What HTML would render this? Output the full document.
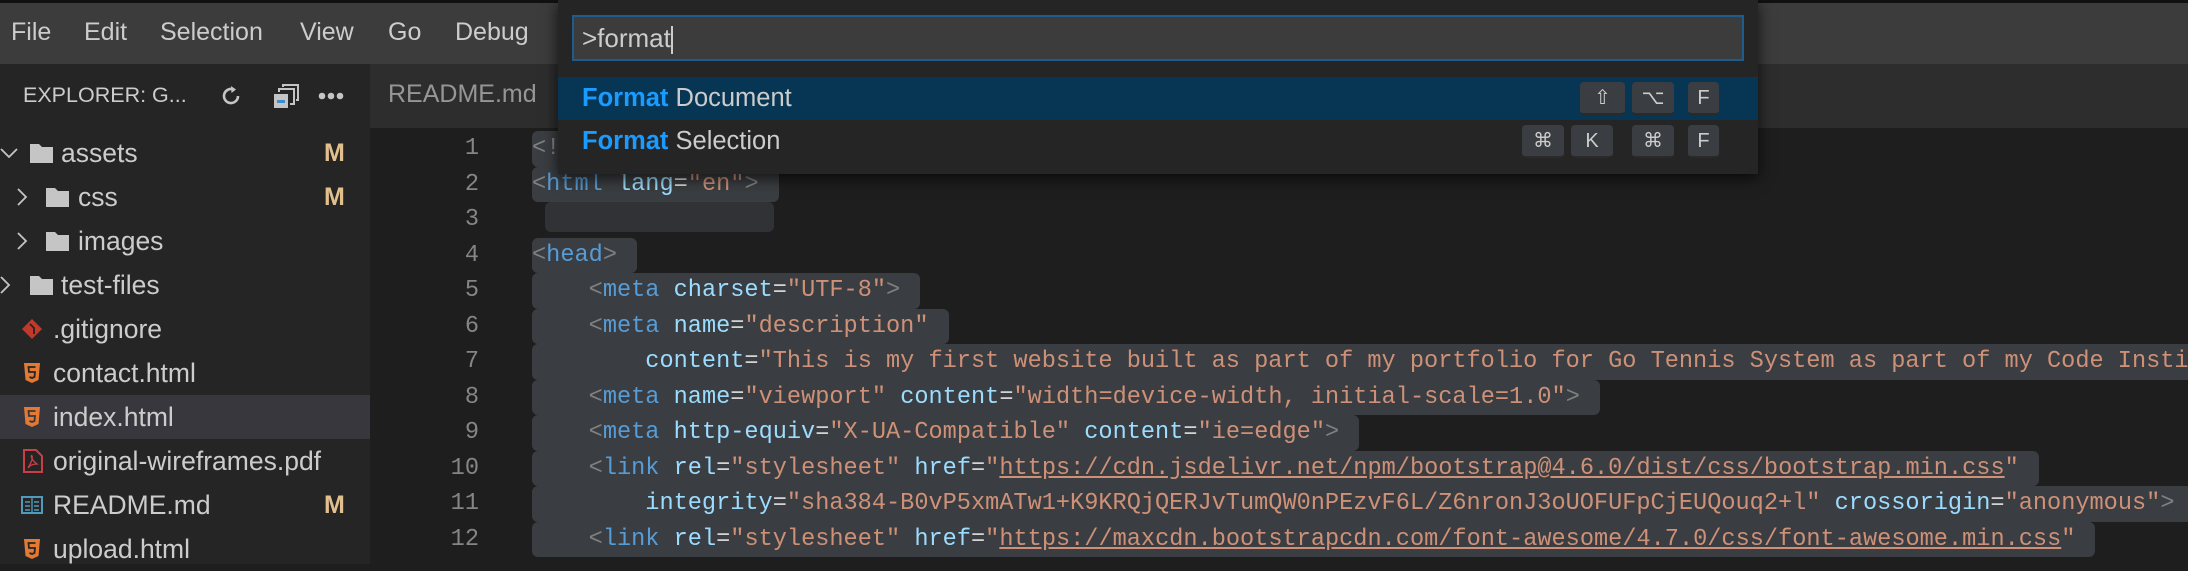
<!DOCTYPE html>
<html><head><meta charset="utf-8"><style>
*{margin:0;padding:0;box-sizing:border-box}
body{width:2188px;height:564px;overflow:hidden;background:#1e1e1e;position:relative;font-family:"Liberation Sans",sans-serif}
.abs{position:absolute}
#menu{left:0;top:0;width:2188px;height:64px;background:#3c3c3c;border-top:3px solid #111}
#menu span{position:absolute;top:15px;font-size:25px;color:#cccccc}
#side{left:0;top:64px;width:370px;height:500px;background:#252526}
#tabs{left:370px;top:64px;width:1818px;height:64px;background:#2d2d2d}
.row{position:absolute;left:0;width:370px;height:44px;font-size:26.5px;color:#cccccc;line-height:44px}
.row .t{position:absolute}
.row .m{position:absolute;left:324px;color:#e2c08d;font-weight:bold;font-size:25px}
.chev{position:absolute;top:0}
.code{position:absolute;left:532px;font-family:"Liberation Mono",monospace;font-size:23.6px;color:#d4d4d4;white-space:pre;height:35.5px;line-height:35.5px}
.code span.h{background:#3a3d41;border-radius:6px;padding-right:20px;display:inline-block;height:35.5px}
.p{color:#808080}.n{color:#569cd6}.a{color:#9cdcfe}.s{color:#ce9178}.u{color:#ce9178;text-decoration:underline}
.ln{position:absolute;left:380px;width:99px;text-align:right;font-family:"Liberation Mono",monospace;font-size:23.6px;color:#858585;line-height:35.5px}
#pal{left:558px;top:0;width:1200px;height:174px;background:#252526;box-shadow:0 4px 14px rgba(0,0,0,.7)}
#inp{left:14px;top:15px;width:1172px;height:46px;background:#3c3c3c;border:2px solid #1d5d8d;font-size:26px;color:#ccc;line-height:42px;padding-left:8px}
.pr{position:absolute;left:0;width:1200px;height:43px;font-size:25.5px;color:#ccc;line-height:43px}
.pr b{color:#1a9bff}
.k{position:absolute;top:5px;height:33px;background:#3a3d41;border-radius:4px;color:#ccc;font-size:20px;text-align:center;line-height:33px;border-bottom:2px solid #2a2a2a}
</style></head><body>
<div id="menu" class="abs">
<span style="left:11px">File</span><span style="left:84px">Edit</span><span style="left:160px">Selection</span><span style="left:300px">View</span><span style="left:388px">Go</span><span style="left:455px">Debug</span>
</div>
<div id="side" class="abs">
 <div class="abs" style="left:23px;top:19px;font-size:21.5px;color:#cccccc">EXPLORER: G...</div>
 <svg class="abs" style="left:218px;top:19px" width="26" height="26" viewBox="0 0 26 26"><path d="M20 13a7 7 0 1 1-4-6.3" fill="none" stroke="#c5c5c5" stroke-width="2.6"/><path d="M13 3l5 3.5-4.5 3.5z" fill="#c5c5c5"/></svg>
 <svg class="abs" style="left:272px;top:20px" width="28" height="28" viewBox="0 0 28 28"><rect x="2" y="10" width="14" height="14" fill="#c5c5c5"/><rect x="5" y="16" width="8" height="3" fill="#3b8ed0"/><path d="M7 8V5h15v15h-4M11 3V1h15v15h-2" fill="none" stroke="#c5c5c5" stroke-width="2"/></svg>
 <svg class="abs" style="left:318px;top:28px" width="26" height="8"><circle cx="4" cy="4" r="3.3" fill="#c5c5c5"/><circle cx="13" cy="4" r="3.3" fill="#c5c5c5"/><circle cx="22" cy="4" r="3.3" fill="#c5c5c5"/></svg>
 <div class="row" style="top:67px"><svg class="chev" width="20" height="44" viewBox="0 0 20 44"><path d="M1 18l8 8 8-8" fill="none" stroke="#c5c5c5" stroke-width="1.8"/></svg><svg class="abs" style="left:29px;top:11px" width="25" height="22"><path d="M1 2h9l3 3h11v16H1z" fill="#c5c5c5"/></svg><span class="t" style="left:61px">assets</span><span class="m">M</span></div>
 <div class="row" style="top:111px"><svg class="chev" style="left:15px" width="20" height="44" viewBox="0 0 20 44"><path d="M3 14l8 8-8 8" fill="none" stroke="#c5c5c5" stroke-width="1.8"/></svg><svg class="abs" style="left:45px;top:11px" width="25" height="22"><path d="M1 2h9l3 3h11v16H1z" fill="#c5c5c5"/></svg><span class="t" style="left:78px">css</span><span class="m">M</span></div>
 <div class="row" style="top:155px"><svg class="chev" style="left:15px" width="20" height="44" viewBox="0 0 20 44"><path d="M3 14l8 8-8 8" fill="none" stroke="#c5c5c5" stroke-width="1.8"/></svg><svg class="abs" style="left:45px;top:11px" width="25" height="22"><path d="M1 2h9l3 3h11v16H1z" fill="#c5c5c5"/></svg><span class="t" style="left:78px">images</span></div>
 <div class="row" style="top:199px"><svg class="chev" width="20" height="44" viewBox="0 0 20 44"><path d="M1 14l8 8-8 8" fill="none" stroke="#c5c5c5" stroke-width="1.8"/></svg><svg class="abs" style="left:29px;top:11px" width="25" height="22"><path d="M1 2h9l3 3h11v16H1z" fill="#c5c5c5"/></svg><span class="t" style="left:61px">test-files</span></div>
 <div class="row" style="top:243px"><svg class="abs" style="left:21px;top:11px" width="22" height="22"><path d="M11 1l10 10-10 10L1 11z" fill="#c0392b"/><path d="M9 6l4 4v6" stroke="#252526" stroke-width="1.8" fill="none"/></svg><span class="t" style="left:53px">.gitignore</span></div>
 <div class="row" style="top:287px"><svg class="abs" style="left:23px;top:11px" width="18" height="22"><path d="M1 1h16l-1.5 17L9 21l-6.5-3z" fill="#e37933"/><path d="M12.5 5h-7l.5 5h6l-.5 5L9 16l-2.5-1" stroke="#252526" stroke-width="1.8" fill="none"/></svg><span class="t" style="left:53px">contact.html</span></div>
 <div class="row" style="top:331px;background:#37373d"><svg class="abs" style="left:23px;top:11px" width="18" height="22"><path d="M1 1h16l-1.5 17L9 21l-6.5-3z" fill="#e37933"/><path d="M12.5 5h-7l.5 5h6l-.5 5L9 16l-2.5-1" stroke="#37373d" stroke-width="1.8" fill="none"/></svg><span class="t" style="left:53px">index.html</span></div>
 <div class="row" style="top:375px"><svg class="abs" style="left:23px;top:10px" width="20" height="24"><path d="M1 1h12l6 6v16H1z" fill="none" stroke="#cc3e44" stroke-width="2"/><path d="M5 19c3-5 5-10 4-12s-2 3 5 8c-3 0-7 1-9 4" fill="none" stroke="#cc3e44" stroke-width="1.3"/></svg><span class="t" style="left:53px">original-wireframes.pdf</span></div>
 <div class="row" style="top:419px"><svg class="abs" style="left:21px;top:13px" width="22" height="18"><rect x="1" y="1" width="20" height="16" fill="none" stroke="#519aba" stroke-width="2"/><path d="M11 1v16M4 6h5M4 10h5M4 14h5M13 6h5M13 10h5M13 14h5" stroke="#519aba" stroke-width="1.4"/></svg><span class="t" style="left:53px">README.md</span><span class="m">M</span></div>
 <div class="row" style="top:463px"><svg class="abs" style="left:23px;top:11px" width="18" height="22"><path d="M1 1h16l-1.5 17L9 21l-6.5-3z" fill="#e37933"/><path d="M12.5 5h-7l.5 5h6l-.5 5L9 16l-2.5-1" stroke="#252526" stroke-width="1.8" fill="none"/></svg><span class="t" style="left:53px">upload.html</span></div>
</div>
<div id="tabs" class="abs"><div class="abs" style="left:18px;top:16px;font-size:25px;color:#969696">README.md</div></div>

<div class="ln" style="top:131px">1<br>2<br>3<br>4<br>5<br>6<br>7<br>8<br>9<br>10<br>11<br>12</div>
<div class="code" style="top:131px"><span class="h"><span class="p">&lt;!</span><span class="n">DOCTYPE</span> <span class="a">html</span><span class="p">&gt;</span></span></div>
<div class="code" style="top:166.5px"><span class="h"><span class="p">&lt;</span><span class="n">html</span> <span class="a">lang</span>=<span class="s">"en"</span><span class="p">&gt;</span></span></div>
<div class="code" style="top:202px;left:545px"><span class="h" style="width:229px;height:30px;background:#303236"></span></div>
<div class="code" style="top:237.5px"><span class="h"><span class="p">&lt;</span><span class="n">head</span><span class="p">&gt;</span></span></div>
<div class="code" style="top:273px"><span class="h">    <span class="p">&lt;</span><span class="n">meta</span> <span class="a">charset</span>=<span class="s">"UTF-8"</span><span class="p">&gt;</span></span></div>
<div class="code" style="top:308.5px"><span class="h">    <span class="p">&lt;</span><span class="n">meta</span> <span class="a">name</span>=<span class="s">"description"</span></span></div>
<div class="code" style="top:344px"><span class="h">        <span class="a">content</span>=<span class="s">"This is my first website built as part of my portfolio for Go Tennis System as part of my Code Institute</span></span></div>
<div class="code" style="top:379.5px"><span class="h">    <span class="p">&lt;</span><span class="n">meta</span> <span class="a">name</span>=<span class="s">"viewport"</span> <span class="a">content</span>=<span class="s">"width=device-width, initial-scale=1.0"</span><span class="p">&gt;</span></span></div>
<div class="code" style="top:415px"><span class="h">    <span class="p">&lt;</span><span class="n">meta</span> <span class="a">http-equiv</span>=<span class="s">"X-UA-Compatible"</span> <span class="a">content</span>=<span class="s">"ie=edge"</span><span class="p">&gt;</span></span></div>
<div class="code" style="top:450.5px"><span class="h">    <span class="p">&lt;</span><span class="n">link</span> <span class="a">rel</span>=<span class="s">"stylesheet"</span> <span class="a">href</span>=<span class="s">"</span><span class="u">https://cdn.jsdelivr.net/npm/bootstrap@4.6.0/dist/css/bootstrap.min.css</span><span class="s">"</span></span></div>
<div class="code" style="top:486px"><span class="h">        <span class="a">integrity</span>=<span class="s">"sha384-B0vP5xmATw1+K9KRQjQERJvTumQW0nPEzvF6L/Z6nronJ3oUOFUFpCjEUQouq2+l"</span> <span class="a">crossorigin</span>=<span class="s">"anonymous"</span><span class="p">&gt;</span></span></div>
<div class="code" style="top:521.5px"><span class="h">    <span class="p">&lt;</span><span class="n">link</span> <span class="a">rel</span>=<span class="s">"stylesheet"</span> <span class="a">href</span>=<span class="s">"</span><span class="u">https://maxcdn.bootstrapcdn.com/font-awesome/4.7.0/css/font-awesome.min.css</span><span class="s">"</span></span></div>

<div id="pal" class="abs">
 <div id="inp" class="abs">&gt;format<span style="display:inline-block;width:2px;height:28px;background:#ccc;vertical-align:middle"></span></div>
 <div class="pr" style="top:77px;background:#073655"><span class="abs" style="left:24px"><b>Format</b> Document</span>
  <div class="k" style="left:1022px;width:45px">⇧</div><div class="k" style="left:1074px;width:42px">⌥</div><div class="k" style="left:1130px;width:31px">F</div></div>
 <div class="pr" style="top:120px"><span class="abs" style="left:24px"><b>Format</b> Selection</span>
  <div class="k" style="left:964px;width:42px">⌘</div><div class="k" style="left:1013px;width:42px">K</div><div class="k" style="left:1074px;width:42px">⌘</div><div class="k" style="left:1130px;width:31px">F</div></div>
</div>
</body></html>
